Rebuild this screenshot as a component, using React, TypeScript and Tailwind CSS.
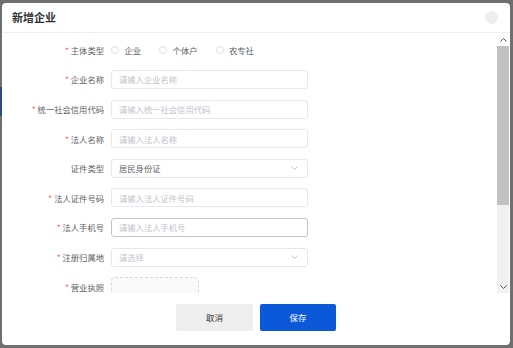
import React from 'react';

type Field = {
  label: string;
  required?: boolean;
  kind: 'input' | 'select' | 'radio' | 'upload';
  placeholder?: string;
  value?: string;
  hover?: boolean;
};

const fields: Field[] = [
  { label: '主体类型', required: true, kind: 'radio' },
  { label: '企业名称', required: true, kind: 'input', placeholder: '请输入企业名称' },
  { label: '统一社会信用代码', required: true, kind: 'input', placeholder: '请输入统一社会信用代码' },
  { label: '法人名称', required: true, kind: 'input', placeholder: '请输入法人名称' },
  { label: '证件类型', kind: 'select', value: '居民身份证' },
  { label: '法人证件号码', required: true, kind: 'input', placeholder: '请输入法人证件号码' },
  { label: '法人手机号', required: true, kind: 'input', placeholder: '请输入法人手机号', hover: true },
  { label: '注册归属地', required: true, kind: 'select', placeholder: '请选择' },
  { label: '营业执照', required: true, kind: 'upload' },
];

const font = { fontFamily: '"Noto Sans CJK SC", "Noto Sans", sans-serif' };

function Chevron({ up = false, className = '' }: { up?: boolean; className?: string }) {
  return (
    <svg width="7" height="4" viewBox="0 0 7 4" className={className}>
      <polyline
        points={up ? '0.5,3.5 3.5,0.5 6.5,3.5' : '0.5,0.5 3.5,3.5 6.5,0.5'}
        fill="none"
        stroke="currentColor"
        strokeWidth="1"
      />
    </svg>
  );
}

function Radio({ label }: { label: string }) {
  return (
    <span className="flex items-center gap-[5.5px]">
      <span className="w-[8px] h-[8px] rounded-full border border-[#dcdfe6] bg-white" />
      <span className="text-[#606266]">{label}</span>
    </span>
  );
}

function Control({ field }: { field: Field }) {
  if (field.kind === 'radio') {
    return (
      <div className="flex items-center gap-[18px]">
        <Radio label="企业" />
        <Radio label="个体户" />
        <Radio label="农专社" />
      </div>
    );
  }
  if (field.kind === 'upload') {
    return (
      <div className="w-[88px] h-[88px] shrink-0 self-start rounded-[4px] border border-dashed border-[#d9d9d9] bg-[#fafafa]" />
    );
  }
  const border = field.hover ? 'border-[#c0c4cc]' : 'border-[#e4e7ed]';
  return (
    <div
      className={`w-[197px] h-[19px] flex items-center justify-between pl-[7px] pr-[9px] rounded-[3px] border bg-white ${border}`}
    >
      <span className={field.value ? 'text-[#606266]' : 'text-[#c0c4cc]'}>
        {field.value ?? field.placeholder}
      </span>
      {field.kind === 'select' && <Chevron className="text-[#c0c4cc]" />}
    </div>
  );
}

export default function App() {
  return (
    <div className="relative w-[513px] h-[348px] bg-[#6f6f6f] overflow-hidden" style={font}>
      <div className="absolute left-0 top-[87px] w-[2px] h-[29px] bg-[#2d4b7f]" />
      <div className="absolute left-[2px] top-[3px] w-[508px] h-[342px] bg-white rounded-[4px] flex flex-col overflow-hidden">
        <header className="h-[30px] shrink-0 flex items-center justify-between pl-[10px] pr-[12px] border-b border-[#eeeff2]">
          <h1 className="text-[11px] font-bold text-[#303133]">新增企业</h1>
          <span className="w-[13px] h-[13px] rounded-full bg-[#eeeeee]" />
        </header>

        <div className="h-[260px] shrink-0 flex overflow-hidden">
          <div className="flex-1 flex flex-col gap-[10.6px] pt-[7.5px] text-[8.3px] overflow-hidden">
            {fields.map((f) => (
              <div key={f.label} className="h-[19px] shrink-0 flex items-center gap-[7px]">
                <div className="w-[102px] shrink-0 text-right text-[#606266]">
                  {f.required && <span className="text-[#f56c6c] mr-[2px]">*</span>}
                  {f.label}
                </div>
                <Control field={f} />
              </div>
            ))}
          </div>

          <div className="w-[12px] mr-[1px] flex flex-col bg-[#f1f1f1]">
            <div className="h-[13px] flex items-center justify-center bg-white text-[#505050]">
              <Chevron up />
            </div>
            <div className="h-[159px] bg-[#c1c1c1]" />
            <div className="flex-1" />
            <div className="h-[13px] flex items-center justify-center text-[#505050]">
              <Chevron />
            </div>
          </div>
        </div>

        <footer className="flex-1 flex justify-center gap-[7px] pt-[11px] text-[8.5px]">
          <button className="w-[77px] h-[27px] rounded-[2px] bg-[#eeeeee] text-[#333333]">取消</button>
          <button className="w-[76px] h-[27px] rounded-[2px] bg-[#0b58d8] text-white">保存</button>
        </footer>
      </div>
    </div>
  );
}
